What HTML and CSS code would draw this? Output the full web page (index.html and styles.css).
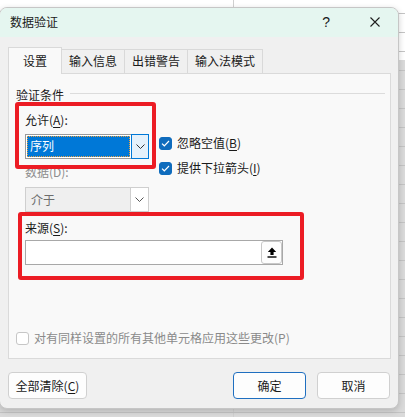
FILE: index.html
```html
<!DOCTYPE html>
<html lang="zh-CN">
<head>
<meta charset="utf-8">
<title>数据验证</title>
<link rel="stylesheet" href="styles.css">
</head>
<body>
<div class="dialog">
  <div class="titlebar">
    <span class="title">数据验证</span>
    <span class="help">?</span>
    <span class="close"><svg width="10" height="10" viewBox="0 0 10 10"><path d="M0.5 0.5 L9.5 9.5 M9.5 0.5 L0.5 9.5" stroke="#1f1f1f" stroke-width="1.1" fill="none"/></svg></span>
  </div>
  <div class="content">
    <div class="tabs">
      <div class="tab active">设置</div>
      <div class="tab">输入信息</div>
      <div class="tab">出错警告</div>
      <div class="tab">输入法模式</div>
    </div>
    <div class="panel">
      <div class="group-head"><span>验证条件</span><span class="rule"></span></div>
      <div class="group">
        <div class="allow-row">
          <div class="leftcol">
            <div class="label first">允许(<u>A</u>):</div>
            <div class="combo focused">
              <div class="combo-value"><span class="sel">序列</span></div>
              <div class="combo-btn"><svg width="9" height="5" viewBox="0 0 9 5"><path d="M0.5 0.5 L4.5 4.5 L8.5 0.5" stroke="#333" stroke-width="1" fill="none"/></svg></div>
            </div>
            <div class="label disabled second">数据(D):</div>
            <div class="combo off">
              <div class="combo-value"><span class="val">介于</span></div>
              <div class="combo-btn"><svg width="9" height="5" viewBox="0 0 9 5"><path d="M0.5 0.5 L4.5 4.5 L8.5 0.5" stroke="#555" stroke-width="1" fill="none"/></svg></div>
            </div>
          </div>
          <div class="checks">
            <div class="check-row"><span class="cbox on"><svg width="9" height="7" viewBox="0 0 9 7"><path d="M1 3.6 L3.3 5.8 L8 1" stroke="#fff" stroke-width="1.2" fill="none"/></svg></span>忽略空值(<u>B</u>)</div>
            <div class="check-row"><span class="cbox on"><svg width="9" height="7" viewBox="0 0 9 7"><path d="M1 3.6 L3.3 5.8 L8 1" stroke="#fff" stroke-width="1.2" fill="none"/></svg></span>提供下拉箭头(<u>I</u>)</div>
          </div>
        </div>
        <div class="label src-label">来源(<u>S</u>):</div>
        <div class="src-input">
          <span class="ref-btn"><svg width="10" height="11" viewBox="0 0 10 11"><path d="M5 0.5 L0.8 5 H3.4 V8 H6.6 V5 H9.2 Z" fill="#000"/><rect x="0.5" y="9.3" width="9" height="1.4" fill="#000"/></svg></span>
        </div>
      </div>
      <div class="check-row apply-all"><span class="cbox"></span>对有同样设置的所有其他单元格应用这些更改(P)</div>
      <div class="annot a1"></div>
      <div class="annot a2"></div>
    </div>
    <div class="buttons">
      <div class="btn clear">全部清除(<u>C</u>)</div>
      <div class="spacer"></div>
      <div class="btn ok">确定</div>
      <div class="btn cancel">取消</div>
    </div>
  </div>
</div>
</body>
</html>
```
FILE: styles.css
```css
* { box-sizing: border-box; }
html, body { margin: 0; padding: 0; }
body {
  width: 405px;
  height: 417px;
  overflow: hidden;
  position: relative;
  font-family: "Noto Sans CJK SC", "Noto Sans", sans-serif;
  font-size: 12px;
  color: #1a1a1a;
  background-color: #dadada;
  background-image:
    repeating-linear-gradient(to bottom, transparent 0 13px, #c4c4c4 13px 14px, transparent 14px 19px),
    linear-gradient(to right, transparent 0 233px, #d0d0d0 233px 234px, transparent 234px),
    linear-gradient(#ffffff, #ffffff);
  background-size: 100% 100%, 100% 100%, 100% 60px;
  background-repeat: no-repeat;
}
.dialog {
  position: absolute;
  left: -1px;
  top: 7px;
  width: 400px;
  height: 402px;
  border: 1px solid #c6c6c6;
  border-radius: 8px;
  background: #f0f0f0;
  overflow: hidden;
  box-shadow: 0 2px 6px rgba(0,0,0,0.18);
  display: flex;
  flex-direction: column;
}
.titlebar {
  height: 29px;
  flex: none;
  background: #e5f6f0;
  display: flex;
  align-items: center;
  padding-left: 10px;
}
.title { line-height: 16px; margin-top: -2px; color: #1a1a1a; }
.help {
  margin-left: auto;
  font-family: "Liberation Sans", sans-serif;
  font-size: 14px;
  margin-right: 40px;
  margin-top: -1px;
}
.close { width: 10px; height: 10px; margin-right: 18px; margin-top: -2px; display: flex; }
.content {
  flex: 1;
  padding: 10px 8px 0 8px;
  display: flex;
  flex-direction: column;
}
.tabs {
  display: flex;
  align-items: flex-end;
  height: 26px;
  position: relative;
  z-index: 1;
}
.tab {
  height: 24px;
  line-height: 22px;
  padding: 0 7px;
  border: 1px solid #d9d9d9;
  border-bottom: none;
  border-left: none;
  background: #f0f0f0;
  color: #1a1a1a;
}
.tab.active {
  height: 27px;
  margin-bottom: -1px;
  width: 54px;
  text-align: center;
  padding: 0;
  line-height: 26px;
  border-left: 1px solid #d9d9d9;
  background: #f9f9f9;
}
.panel {
  position: relative;
  height: 286px;
  flex: none;
  width: 383px;
  border: 1px solid #dadada;
  background: #f9f9f9;
  padding: 0 0 12px 7px;
  display: flex;
  flex-direction: column;
}
.group-head {
  margin-top: 13px;
  height: 16px;
  line-height: 16px;
  display: flex;
  align-items: center;
}
.rule {
  flex: 1;
  height: 1px;
  background: #dcdcdc;
  margin: -3px 5px 0 6px;
}
.group { padding-left: 9px; }
.allow-row { display: flex; }
.leftcol { width: 124px; display: flex; flex-direction: column; }
.label { height: 16px; line-height: 16px; white-space: nowrap; }
.label.first { margin-top: 9px; }
.label.second { margin-top: 5px; }
.label.disabled { color: #8d8d8d; }
.combo {
  height: 25px;
  display: flex;
  border: 1px solid #a9a9a9;
  background: #fff;
}
.combo.focused { margin-top: 6px; border-color: #9a9a9a; }
.combo.off { margin-top: 7px; border-color: #cfcfcf; background: #efefef; }
.combo-value {
  flex: 1;
  padding: 1px;
  display: flex;
}
.sel {
  flex: 1;
  background: #0078d7;
  color: #fff;
  line-height: 19px;
  padding-left: 3px;
  outline: 1px dotted #e8a040;
  outline-offset: -1px;
}
.val { color: #6d6d6d; line-height: 21px; padding-left: 4px; }
.combo-btn {
  width: 17px;
  display: flex;
  align-items: center;
  justify-content: center;
}
.combo.focused .combo-btn {
  background: #e5f1fb;
  border: 1px solid #0078d7;
  margin: -1px -1px -1px 0;
  width: 18px;
}
.combo.off .combo-btn { background: #fff; border-left: 1px solid #cfcfcf; width: 18px; }
.checks {
  margin-left: 10px;
  padding-top: 32px;
  display: flex;
  flex-direction: column;
  gap: 9px;
}
.check-row {
  display: flex;
  align-items: center;
  height: 16px;
  line-height: 16px;
  white-space: nowrap;
}
.cbox {
  width: 13px;
  height: 13px;
  border-radius: 3px;
  border: 1px solid #bcbcbc;
  background: #fff;
  margin-right: 5px;
  display: flex;
  align-items: center;
  justify-content: center;
  flex: none;
}
.cbox.on { background: #0f6cbd; border-color: #0f6cbd; }
.src-label { margin-top: 8px; }
.src-input {
  margin-top: 4px;
  width: 258px;
  height: 25px;
  border: 1px solid #a8a8a8;
  background: #fff;
  display: flex;
  justify-content: flex-end;
  padding: 0;
}
.ref-btn {
  width: 21px;
  height: 23px;
  border: 1px solid #c8c8c8;
  border-radius: 3px;
  background: #fdfdfd;
  display: flex;
  align-items: center;
  justify-content: center;
}
.apply-all { margin-top: auto; color: #8a8a8a; }
.apply-all .cbox { border-color: #c6c6c6; }
u { text-underline-offset: 2px; text-decoration-thickness: 1px; }
.annot {
  position: absolute;
  border: 4px solid #ec1c24;
  border-radius: 3px;
}
.a1 { left: 6px; top: 28px; width: 141px; height: 67px; }
.a2 { left: 9px; top: 138px; width: 286px; height: 68px; }
.buttons {
  margin-top: 13px;
  height: 27px;
  display: flex;
  gap: 11px;
}
.spacer { flex: 1; }
.btn {
  height: 27px;
  border: 1px solid #d0d0d0;
  border-radius: 4px;
  background: #fdfdfd;
  display: flex;
  align-items: center;
  justify-content: center;
  line-height: 16px;
}
.btn.clear { width: 79px; }
.btn.ok { width: 73px; border-color: #1f6fc0; }
.btn.cancel { width: 73px; }
```
